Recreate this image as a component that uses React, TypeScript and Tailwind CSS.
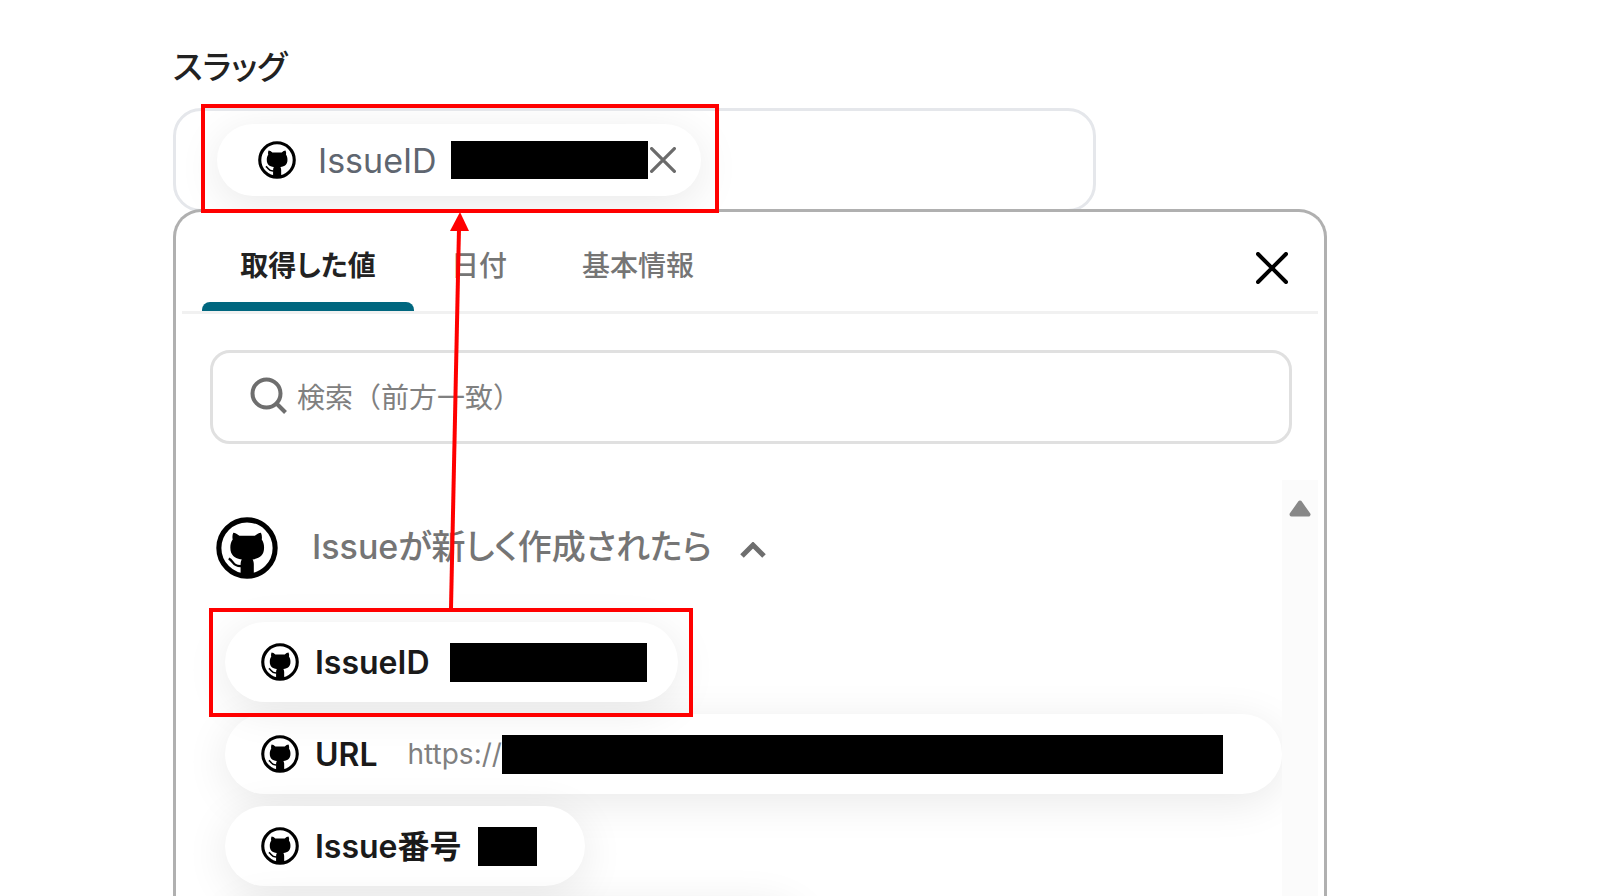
import type { ReactNode } from "react";

function GithubIcon({ className }: { className: string }) {
  return (
    <svg viewBox="0 0 61 61" className={className} aria-hidden="true">
      <circle cx="30.5" cy="30.5" r="27.7" fill="none" stroke="#000" strokeWidth="5" />
      <path d="M17 15.400c2 0 4.200 1.300 6 3.100h15.200c1.800-1.800 4-3.100 6-3.100 1 2.200 1.200 4.600.8 6.800 1.600 2.300 2.300 4.800 2.300 7.800 0 7.500-4 10.700-11.300 11.700.8 1.300 1.200 3 1.200 4.800V58H24.200V46.500c0-1.800.4-3.500 1.200-4.800-7.300-1-11.300-4.200-11.300-11.700 0-3 .7-5.500 2.300-7.800-.4-2.200-.4-4.600.6-6.800Z" />
      <path d="M12.500 41c4.500 1.500 3.600 7.800 12.400 7.300" fill="none" stroke="#000" strokeWidth="2.400" />
    </svg>
  );
}

function CloseIcon({ className }: { className: string }) {
  return (
    <svg viewBox="0 0 32 32" className={className} fill="none" stroke="currentColor" strokeWidth="4" strokeLinecap="round" aria-hidden="true">
      <path d="M2 2l28 28M30 2L2 30" />
    </svg>
  );
}

function Highlight({ className }: { className: string }) {
  return <span className={`pointer-events-none absolute z-10 border-4 border-[#ff0000] ${className}`} />;
}

function Option({ label, className, children }: { label: string; className: string; children: ReactNode }) {
  return (
    <button
      type="button"
      className={`flex h-20 items-center rounded-full bg-white pl-9 shadow-[0_8px_44px_rgba(0,0,0,0.09)] ${className}`}
    >
      <GithubIcon className="h-[38px] w-[38px] shrink-0" />
      <span className="ml-4 pt-[2px] text-[32px] font-semibold whitespace-nowrap text-[#1a1a1a]">{label}</span>
      {children}
    </button>
  );
}

function SlugField() {
  return (
    <div className="relative w-4/5">
      <div className="flex h-[104px] items-center overflow-hidden rounded-[28px] border-3 border-[#e5e7eb] bg-white pl-[41px]">
        <div className="flex h-[72px] w-[484px] shrink-0 items-center rounded-full bg-white pl-[41px] shadow-[0_8px_44px_rgba(0,0,0,0.09)]">
          <GithubIcon className="h-[38px] w-[38px] shrink-0" />
          <span className="ml-[22px] w-[133px] text-[34px] text-[#5f6670]">IssueID</span>
          <span className="h-[38px] w-[197px] shrink-0 bg-black" />
          <button type="button" aria-label="削除" className="ml-[2px] text-[#6b6b6b]">
            <CloseIcon className="h-[26px] w-[26px]" />
          </button>
        </div>
        <input id="slug" type="text" className="h-full min-w-0 flex-1 bg-transparent outline-none" />
      </div>
      <Highlight className="-top-1 left-7 h-[109px] w-[518px]" />
    </div>
  );
}

function Tabs() {
  return (
    <div className="mx-[6px] flex h-[102px] justify-between border-b-3 border-[#f1f1f1] pr-[30px] pl-5">
      <div className="flex text-[28px] font-medium text-[#757575] [font-feature-settings:'palt']">
        <button type="button" className="relative w-[212px] pt-2 font-bold text-[#222]">
          取得した値
          <span className="absolute inset-x-0 bottom-0 h-[9px] rounded-t-lg bg-[#00677f]" />
        </button>
        <button type="button" className="w-[130px] pt-2">日付</button>
        <button type="button" className="w-[188px] pt-2">基本情報</button>
      </div>
      <button type="button" aria-label="閉じる" className="pt-3 text-black">
        <CloseIcon className="h-8 w-8" />
      </button>
    </div>
  );
}

function SearchBox() {
  return (
    <label className="mr-[32px] ml-[34px] mt-9 flex h-[94px] shrink-0 items-center rounded-[20px] border-3 border-[#e0e0e0] pl-[37px]">
      <svg viewBox="0 0 37 37" className="mb-1 h-[37px] w-[37px] shrink-0" fill="none" stroke="#6e6e6e" strokeWidth="4" aria-hidden="true">
        <circle cx="16.500" cy="16.500" r="14" />
        <path d="M26 26l9.500 9.500" />
      </svg>
      <input
        type="search"
        aria-label="検索"
        placeholder="検索（前方一致）"
        className="ml-[10px] min-w-0 flex-1 bg-transparent pt-[2px] text-[28px] outline-none placeholder:text-[#808080]"
      />
    </label>
  );
}

function ValueList() {
  return (
    <div className="mt-9 mr-[6px] ml-[6px] flex min-h-0 flex-1">
      <div className="min-w-0 flex-1 overflow-hidden pl-[34px]">
        <button type="button" className="flex h-[136px] items-center text-[#757575]">
          <GithubIcon className="h-[62px] w-[62px]" />
          <span className="ml-[34px] pb-1 text-[34px] font-medium [font-feature-settings:'palt']">Issueが新しく作成されたら</span>
          <svg viewBox="0 0 26 16" className="mt-1 ml-7 h-4 w-[26px]" fill="none" stroke="#6e6e6e" strokeWidth="5" aria-hidden="true">
            <path d="M2 14L13 3l11 11" />
          </svg>
        </button>
        <div className="mt-[6px] flex flex-col items-start gap-[12px] pl-[9px]">
          <div className="relative">
            <Option label="IssueID" className="w-[453px]">
              <span className="ml-5 h-[39px] w-[197px] bg-black" />
            </Option>
            <Highlight className="-top-[14px] -left-4 h-[109px] w-[484px]" />
          </div>
          <Option label="URL" className="w-full">
            <span className="ml-[30px] text-[28px] text-[#808080]">https://</span>
            <span className="mr-[59px] h-[39px] flex-1 bg-black" />
          </Option>
          <Option label="Issue番号" className="w-[360px]">
            <span className="ml-4 h-[39px] w-[59px] bg-black" />
          </Option>
          <div className="h-20 w-[580px] rounded-full bg-white shadow-[0_8px_44px_rgba(0,0,0,0.09)]" />
        </div>
      </div>
      {/* scroll track */}
      <div className="flex w-9 justify-center bg-[#fbfbfb] pt-5">
        <svg viewBox="0 0 22 17" className="h-[17px] w-[22px]" aria-hidden="true">
          <path d="M11 2.500L19.500 14.500H2.500Z" fill="#888" stroke="#888" strokeWidth="4" strokeLinejoin="round" />
        </svg>
      </div>
    </div>
  );
}

export default function App() {
  return (
    <div className="flex h-screen flex-col overflow-hidden bg-white pt-10 pr-[273px] pl-[173px] font-['Inter','Noto_Sans_CJK_JP',sans-serif]">
      <label htmlFor="slug" className="mb-4 pt-[2px] text-[33px] leading-[50px] font-medium text-[#222] [font-feature-settings:'palt']">
        スラッグ
      </label>
      <SlugField />
      <div className="relative -mt-[3px] flex min-h-0 flex-1 flex-col rounded-t-[28px] border-3 border-b-0 border-[#b0b0b0]">
        <Tabs />
        <SearchBox />
        <ValueList />
        {/* arrow from the picked value up to the field */}
        <svg viewBox="0 0 28 396" className="pointer-events-none absolute top-0 left-[268px] z-10 h-[396px] w-7" aria-hidden="true">
          <path d="M7 396L15 16" stroke="#ff0000" strokeWidth="4" />
          <path d="M16 0L25 19H6Z" fill="#ff0000" />
        </svg>
      </div>
    </div>
  );
}
